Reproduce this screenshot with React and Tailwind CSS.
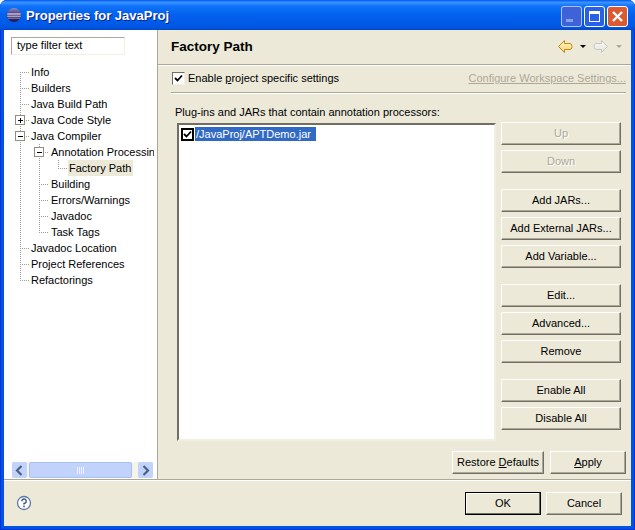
import React from 'react';

const fontCls = "font-['Liberation_Sans',sans-serif]";

function Btn({ children, disabled, w = 'w-[120px]', isDefault }) {
  return (
    <div className={`h-[23px] ${w} flex items-center justify-center bg-[#ece9d8] border ${isDefault ? 'border-black shadow-[inset_-1px_-1px_0_#716f64,inset_1px_1px_0_#fff]' : 'border-t-white border-l-white border-r-[#716f64] border-b-[#716f64] shadow-[inset_-1px_-1px_0_#aca899]'} text-[11px] ${disabled ? 'text-[#aca899] [text-shadow:1px_1px_0_#fff]' : 'text-black'}`}>
      <span>{children}</span>
    </div>
  );
}

function TreeLines({ width, verticals = [], elbow, last, first, expander }) {
  // dotted guides for one 16px tree row
  return (
    <svg width={width} height="16" className="shrink-0" shapeRendering="crispEdges">
      {verticals.map((x) => (
        <line key={x} x1={x + 0.5} y1="0" x2={x + 0.5} y2="16" stroke="#a0a0a0" strokeDasharray="1 1" />
      ))}
      <line x1={elbow + 0.5} y1={first ? 8 : 0} x2={elbow + 0.5} y2={last ? 8 : 16} stroke="#a0a0a0" strokeDasharray="1 1" />
      <line x1={elbow} y1="8.5" x2={width - 1} y2="8.5" stroke="#a0a0a0" strokeDasharray="1 1" />
      {expander && (
        <g>
          <rect x={elbow - 4.5} y="3.5" width="9" height="9" fill="#fff" stroke="#918e7c" />
          <line x1={elbow - 2} y1="8.5" x2={elbow + 3} y2="8.5" stroke="#000" />
          {expander === 'plus' && <line x1={elbow + 0.5} y1="6" x2={elbow + 0.5} y2="11" stroke="#000" />}
        </g>
      )}
    </svg>
  );
}

const rows = [
  { t: 'Info', d: 0, first: true },
  { t: 'Builders', d: 0 },
  { t: 'Java Build Path', d: 0 },
  { t: 'Java Code Style', d: 0, e: 'plus' },
  { t: 'Java Compiler', d: 0, e: 'minus' },
  { t: 'Annotation Processing', d: 1, e: 'minus' },
  { t: 'Factory Path', d: 2, sel: true },
  { t: 'Building', d: 1 },
  { t: 'Errors/Warnings', d: 1 },
  { t: 'Javadoc', d: 1 },
  { t: 'Task Tags', d: 1, last: true },
  { t: 'Javadoc Location', d: 0 },
  { t: 'Project References', d: 0 },
  { t: 'Refactorings', d: 0, last: true },
];

function TreeRow({ r }) {
  const cfg = [
    { width: 26, elbow: 16, verticals: [] },
    { width: 46, elbow: 35, verticals: [16] },
    { width: 64, elbow: 54, verticals: [16, 35] },
  ][r.d];
  return (
    <div className="flex h-4 items-center whitespace-nowrap">
      <TreeLines {...cfg} first={r.first} last={r.last || r.d === 2} expander={r.e} />
      <span className={`pl-[1px] pr-[2px] h-4 leading-4 text-[11px] text-black ${r.sel ? 'bg-[#ece9d8]' : ''}`}>{r.t}</span>
    </div>
  );
}

function NavArrow({ active }) {
  return (
    <svg width="16" height="16" viewBox="0 0 16 16" className={active ? '' : 'scale-x-[-1]'}>
      <defs>
        <linearGradient id={active ? 'navOn' : 'navOff'} x1="0" y1="0" x2="0" y2="1">
          <stop offset="0" stopColor={active ? '#fff4cf' : '#fbfbf8'} />
          <stop offset="1" stopColor={active ? '#ffd266' : '#e2e2dc'} />
        </linearGradient>
      </defs>
      <path d="M7.5 1.5 L1.5 7.5 L7.5 13.5 V10.5 H13 Q15 10.5 15 7.5 Q15 4.5 13 4.5 H7.5 Z" fill={`url(#${active ? 'navOn' : 'navOff'})`} stroke={active ? '#c08a12' : '#c6c6be'} strokeLinejoin="round" />
    </svg>
  );
}

function Chevron({ dir }) {
  return (
    <svg width="15" height="15" viewBox="0 0 15 15" className="shrink-0">
      <path d={dir === 'left' ? 'M9.5 3 L5 7.5 L9.5 12' : 'M5.5 3 L10 7.5 L5.5 12'} fill="none" stroke="#4d6185" strokeWidth="2.2" />
    </svg>
  );
}

function EclipseIcon() {
  return (
    <svg width="16" height="16" viewBox="0 0 16 16" className="shrink-0">
      <defs>
        <linearGradient id="sphere" x1="0" y1="0" x2="0" y2="1">
          <stop offset="0" stopColor="#8f88c4" />
          <stop offset="0.45" stopColor="#47397f" />
          <stop offset="1" stopColor="#1f1a4c" />
        </linearGradient>
      </defs>
      <circle cx="8" cy="8" r="7" fill="url(#sphere)" />
      <path d="M1.3 7h13.4" stroke="#fff" strokeWidth="1.1" />
      <path d="M1.2 9.2h13.6" stroke="#e8e6f4" strokeWidth="0.9" />
      <path d="M2 11.2h12" stroke="#b8b4d8" strokeWidth="0.7" />
    </svg>
  );
}

export default function App() {
  return (
    <div className={`w-[635px] h-[530px] flex flex-col overflow-hidden rounded-t-[7px] bg-[#0054e3] shadow-[inset_1px_0_0_#0831d9,inset_-1px_0_0_#0831d9,inset_0_-1px_0_#0831d9] ${fontCls}`}>
      {/* title bar */}
      <div className="h-[30px] shrink-0 flex items-center pl-[6px] pr-[7px] bg-[linear-gradient(180deg,#0058ee_0%,#3a93ff_8%,#0f72f8_20%,#0261ee_50%,#0058e6_85%,#0055e0_93%,#0146c4_100%)]">
        <EclipseIcon />
        <span className="ml-[4px] pt-[1px] text-white font-bold text-[13px] [text-shadow:1px_1px_0_#0f1f8a]">Properties for JavaProj</span>
        <div className="ml-auto mt-[3px] flex gap-[2px]">
          <div className="w-[21px] h-[21px] rounded-[3px] border border-white/60 bg-[#3e63d8] flex items-end pl-[4px] pb-[4px]">
            <div className="w-[7px] h-[3px] bg-[#88a0e8]" />
          </div>
          <div className="w-[21px] h-[21px] rounded-[3px] border border-white bg-[#2a5fe8] flex items-center justify-center">
            <div className="w-[11px] h-[11px] border border-white border-t-[3px]" />
          </div>
          <div className="w-[21px] h-[21px] rounded-[3px] border border-white bg-[#dc5a32] flex items-center justify-center">
            <svg width="13" height="13" viewBox="0 0 13 13"><path d="M2 2 L11 11 M11 2 L2 11" stroke="#fff" strokeWidth="2.4" /></svg>
          </div>
        </div>
      </div>

      {/* window body */}
      <div className="flex-1 mx-[4px] mb-[4px] bg-[#ece9d8] flex flex-col min-h-0">
        <div className="h-[449px] flex">
          {/* left panel */}
          <div className="w-[153px] bg-white flex flex-col">
            <div className="pt-[7px] pl-[7px]">
              <div className="w-[114px] h-[18px] border border-t-[#aca899] border-l-[#aca899] border-r-[#f1efe2] border-b-[#f1efe2] pl-[5px] leading-[15px] text-[11px] text-black">type filter text</div>
            </div>
            <div className="mt-[9px] w-[150px] overflow-hidden">
              {rows.map((r) => <TreeRow key={r.t} r={r} />)}
            </div>
            <div className="mt-auto mb-[1px] ml-[8px] w-[141px] h-[16px] flex bg-[#f5f3ea]">
              <div className="w-[15px] h-[16px] rounded-[2px] bg-[#c1d3fb] flex items-center justify-center"><Chevron dir="left" /></div>
              <div className="ml-[2px] w-[103px] rounded-[2px] bg-[#c1d3fb] border border-[#a9bff2] flex items-center justify-center gap-[1px]">
                {[0, 1, 2, 3].map((i) => <div key={i} className="w-[1px] h-[7px] bg-[#eef3ff]" />)}
              </div>
              <div className="ml-auto w-[15px] h-[16px] rounded-[2px] bg-[#c1d3fb] flex items-center justify-center"><Chevron dir="right" /></div>
            </div>
          </div>
          <div className="w-[1px] bg-[#aca899]" />

          {/* right panel */}
          <div className="flex-1 min-w-0 flex flex-col">
            <div className="h-[35px] flex items-center pl-[13px] pr-[2px] border-b border-[#aca899] shadow-[0_1px_0_#fff]">
              <span className="font-bold text-[13.5px] text-black">Factory Path</span>
              <div className="ml-auto flex items-center">
                <NavArrow active />
                <svg width="20" height="8" viewBox="0 0 20 8"><path d="M7 2h6l-3 3z" fill="#000" /></svg>
                <NavArrow />
                <svg width="20" height="8" viewBox="0 0 20 8"><path d="M7 2h6l-3 3z" fill="#aca899" /></svg>
              </div>
            </div>
            <div className="h-[28px] ml-[13px] mr-[5px] flex items-center border-b border-[#aca899] shadow-[0_1px_0_#fff]">
              <div className="w-[13px] h-[13px] ml-[1px] bg-white border border-t-[#716f64] border-l-[#716f64] border-r-[#f1efe2] border-b-[#f1efe2] flex items-center justify-center">
                <svg width="9" height="9" viewBox="0 0 9 9"><path d="M1 4 L3.5 6.5 L8 1.5" fill="none" stroke="#000" strokeWidth="1.8" /></svg>
              </div>
              <span className="ml-[3px] text-[11px] text-black">Enable <span className="underline">p</span>roject specific settings</span>
              <span className="ml-auto text-[11px] text-[#aca899] underline">Configure Workspace Settings...</span>
            </div>
            <div className="pl-[17px] pt-[11px] h-[29px] text-[11px] text-black leading-[16px]">Plug-ins and JARs that contain annotation processors:</div>
            <div className="flex pl-[19px] pr-[10px]">
              <div className="w-[320px] h-[318px] mt-[1px] bg-white border-2 border-t-[#716f64] border-l-[#716f64] border-r-[#f1efe2] border-b-[#f1efe2] pt-[2px] pl-[2px]">
                <div className="flex items-center">
                  <div className="w-[13px] h-[13px] border-2 border-black flex items-center justify-center">
                    <svg width="9" height="9" viewBox="0 0 9 9"><path d="M1 4 L3.5 6.5 L8 1.5" fill="none" stroke="#000" strokeWidth="1.8" /></svg>
                  </div>
                  <span className="ml-[1px] w-[121px] h-[14px] px-[1px] leading-[14px] text-[11px] text-white bg-[#316ac5]">/JavaProj/APTDemo.jar</span>
                </div>
              </div>
              <div className="ml-[5px] flex flex-col gap-[5px]">
                <Btn disabled>Up</Btn>
                <Btn disabled>Down</Btn>
                <div className="h-[6px]" />
                <Btn>Add JARs...</Btn>
                <Btn>Add External JARs...</Btn>
                <Btn>Add Variable...</Btn>
                <div className="h-[6px]" />
                <Btn>Edit...</Btn>
                <Btn>Advanced...</Btn>
                <Btn>Remove</Btn>
                <div className="h-[6px]" />
                <Btn>Enable All</Btn>
                <Btn>Disable All</Btn>
              </div>
            </div>
            <div className="mt-auto mb-[5px] flex justify-end gap-[6px] pr-[5px]">
              <Btn w="w-[92px]">Restore <span className="underline">D</span>efaults</Btn>
              <Btn w="w-[76px]"><span className="underline">A</span>pply</Btn>
            </div>
          </div>
        </div>
        {/* bottom bar */}
        <div className="flex-1 flex items-center border-t border-[#aca899] shadow-[inset_0_1px_0_#fff] pl-[12px] pr-[9px]">
          <svg width="16" height="16" viewBox="0 0 16 16" className="shrink-0">
            <circle cx="8" cy="8" r="6.5" fill="#fff" stroke="#5d7aa8" strokeWidth="1.3" />
            <path d="M5.8 6.3 A2.2 2.2 0 1 1 8 8.4 V9.6" fill="none" stroke="#3b5680" strokeWidth="1.4" />
            <rect x="7.2" y="10.6" width="1.6" height="1.6" fill="#3b5680" />
          </svg>
          <div className="ml-auto flex gap-[5px]">
            <Btn w="w-[76px]" isDefault>OK</Btn>
            <Btn w="w-[76px]">Cancel</Btn>
          </div>
        </div>
      </div>
    </div>
  );
}
